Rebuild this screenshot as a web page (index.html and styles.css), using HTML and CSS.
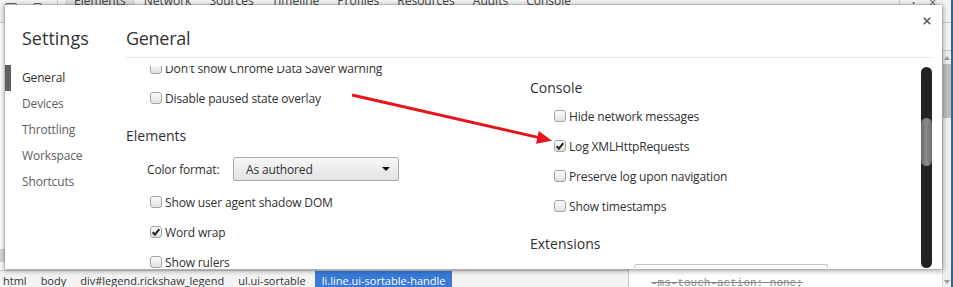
FILE: index.html
```html
<!DOCTYPE html>
<html>
<head>
<meta charset="utf-8">
<title>Settings</title>
<link rel="stylesheet" href="styles.css">
</head>
<body>
<div class="devtools">
  <div class="tabbar">
    <span class="tb-icon tb-inspect"></span>
    <span class="tb-icon tb-device"></span>
    <span class="tb-sep"></span>
    <span class="tab tab-selected">Elements</span>
    <span class="tab">Network</span>
    <span class="tab">Sources</span>
    <span class="tab">Timeline</span>
    <span class="tab">Profiles</span>
    <span class="tab">Resources</span>
    <span class="tab">Audits</span>
    <span class="tab">Console</span>
    <span class="tb-spacer"></span>
    <span class="tb-sep"></span>
    <span class="tb-dots">⋮</span>
    <span class="tb-dots">×</span>
  </div>
  <div class="main">
    <div class="left-pane">
      <div class="tree"><div class="tree-sel"></div></div>
      <div class="crumbs">
        <span class="crumb">html</span>
        <span class="crumb">body</span>
        <span class="crumb">div#legend.rickshaw_legend</span>
        <span class="crumb">ul.ui-sortable</span>
        <span class="crumb crumb-selected">li.line.ui-sortable-handle</span>
      </div>
    </div>
    <div class="styles">
      <div class="styles-toolbar"></div>
      <div class="styles-body">
        <div class="styles-content">
          <div class="prop"><s>-ms-touch-action: none;</s></div>
        </div>
        <div class="vscroll">
          <span class="arr-up"></span>
          <span class="vthumb"></span>
          <span class="vfill"></span>
          <span class="arr-down"></span>
        </div>
      </div>
    </div>
  </div>
</div>

<div class="dialog">
  <div class="sidebar">
    <div class="title">Settings</div>
    <div class="nav">
      <div class="nav-item nav-selected">General</div>
      <div class="nav-item">Devices</div>
      <div class="nav-item">Throttling</div>
      <div class="nav-item">Workspace</div>
      <div class="nav-item">Shortcuts</div>
    </div>
  </div>
  <div class="pane">
    <div class="pane-header">General</div>
    <div class="content">
      <div class="columns">
        <div class="col col-left">
          <div class="row"><span class="cb"></span>Don't show Chrome Data Saver warning</div>
          <div class="row"><span class="cb"></span>Disable paused state overlay</div>
          <div class="section-title">Elements</div>
          <div class="select-row">
            <span class="select-label">Color format:</span>
            <span class="select"><span class="select-text">As authored</span><span class="select-caret"></span></span>
          </div>
          <div class="row"><span class="cb"></span>Show user agent shadow DOM</div>
          <div class="row"><span class="cb cb-checked"><svg width="12" height="12" viewBox="0 0 12 12"><path d="M2.6 6.3 L4.9 8.6 L9.3 3.2" fill="none" stroke="#2a2a2a" stroke-width="2.1"/></svg></span>Word wrap</div>
          <div class="row"><span class="cb"></span>Show rulers</div>
        </div>
        <div class="col col-right">
          <div class="section-title">Console</div>
          <div class="row"><span class="cb"></span>Hide network messages</div>
          <div class="row"><span class="cb cb-checked"><svg width="12" height="12" viewBox="0 0 12 12"><path d="M2.6 6.3 L4.9 8.6 L9.3 3.2" fill="none" stroke="#2a2a2a" stroke-width="2.1"/></svg></span>Log XMLHttpRequests</div>
          <div class="row"><span class="cb"></span>Preserve log upon navigation</div>
          <div class="row"><span class="cb"></span>Show timestamps</div>
          <div class="section-title section-gap">Extensions</div>
          <div class="ext-row"><span class="ext-select"></span></div>
        </div>
      </div>
      <div class="scrollbar"><span class="thumb"></span></div>
    </div>
  </div>
  <button class="close" aria-label="Close">
    <svg width="8" height="8" viewBox="0 0 8 8"><path d="M0.8 0.8 L7.2 7.2 M7.2 0.8 L0.8 7.2" stroke="#555" stroke-width="1.6"/></svg>
  </button>
</div>

<svg class="annot" width="953" height="287" viewBox="0 0 953 287">
  <line x1="352" y1="95" x2="539" y2="137.6" stroke="#e8141c" stroke-width="3"/>
  <polygon points="552,140.7 538.8,131.1 536,143.7" fill="#e8141c"/>
</svg>
</body>
</html>
```

FILE: styles.css
```css
* { box-sizing: border-box; }
html, body { margin: 0; padding: 0; }
body {
  width: 953px;
  height: 287px;
  overflow: hidden;
  position: relative;
  font-family: "Open Sans", "Noto Sans", sans-serif;
  font-size: 12px;
  color: #333;
  background: #fff;
}

/* ---------- background devtools ---------- */
.devtools {
  display: flex;
  flex-direction: column;
  height: 287px;
  border-right: 2px solid #2d6896;
}
.tabbar {
  height: 23px;
  flex: none;
  display: flex;
  align-items: flex-start;
  background: #f3f3f3;
  border-bottom: 1px solid #cdcdcd;
  overflow: hidden;
}
.tb-icon {
  width: 12px;
  height: 13px;
  margin-top: 3px;
  border: 1.5px solid #666;
  border-radius: 2px;
}
.tb-inspect { margin-left: 5px; }
.tb-device { margin-left: 16px; width: 9px; }
.tb-sep {
  width: 1px;
  height: 16px;
  background: #ccc;
  margin: 0 7px 0 15px;
}
.tab {
  padding: 0 9px;
  line-height: 1px;
  height: 22px;
  color: #444;
  white-space: nowrap;
}
.tab-selected { background: #dcdcdc; }
.tb-spacer { flex: 1; }
.tb-dots { line-height: 4px; width: 22px; color: #555; font-size: 13px; }

.main { flex: 1; display: flex; min-height: 0; }
.left-pane { width: 628px; flex: none; display: flex; flex-direction: column; }
.tree { flex: 1; padding-top: 226px; }
.tree-sel { height: 13px; background: #dadada; }
.crumbs {
  height: 17px;
  flex: none;
  display: flex;
  align-items: stretch;
  background: #f3f3f3;
  border-top: 1px solid #d0d0d0;
  white-space: nowrap;
  font-size: 11px;
}
.crumb { padding: 3px 7px 0; line-height: 14px; color: #333; }
.crumb:first-child { padding-left: 3px; }
.crumb-selected { background: #3879d9; color: #fff; margin-left: 2px; }

.styles {
  flex: 1;
  display: flex;
  flex-direction: column;
  border-left: 1px solid #c8c8c8;
}
.styles-toolbar { height: 28px; flex: none; background: #f3f3f3; border-bottom: 1px solid #ccc; }
.styles-body { flex: 1; display: flex; }
.styles-content { flex: 1; display: flex; flex-direction: column; justify-content: flex-end; }
.prop {
  padding-left: 22px;
  font-family: "Liberation Mono", monospace;
  font-size: 11px;
  line-height: 14px;
  color: #888;
  margin-bottom: -3px;
}
.vscroll {
  width: 9px;
  flex: none;
  display: flex;
  flex-direction: column;
  align-items: center;
  background: #efefef;
  border-left: 1px solid #dcdcdc;
  padding: 5px 0 3px;
}
.arr-up { width: 0; height: 0; border-left: 3px solid transparent; border-right: 3px solid transparent; border-bottom: 4px solid #9a9a9a; }
.arr-down { width: 0; height: 0; border-left: 3px solid transparent; border-right: 3px solid transparent; border-top: 4px solid #9a9a9a; }
.vthumb { width: 8px; height: 54px; margin-top: 4px; background: #bdbdbd; border-radius: 1px; }
.vfill { flex: 1; }

/* ---------- dialog ---------- */
.dialog {
  position: absolute;
  left: 5px;
  top: 5px;
  width: 937px;
  height: 264px;
  background: #fff;
  display: grid;
  grid-template-columns: 121px 1fr;
  box-shadow: 0 0 0 1px rgba(0,0,0,0.08), 0 1px 5px 1px rgba(0,0,0,0.35);
}
.sidebar { padding-top: 21px; }
.title {
  font-size: 18px;
  line-height: 24px;
  padding-left: 17px;
  color: #333;
}
.nav { margin-top: 15px; }
.nav-item {
  height: 26px;
  line-height: 26px;
  padding-left: 17px;
  color: #606060;
  letter-spacing: -0.15px;
}
.nav-selected {
  border-left: 6px solid #5f5f5f;
  padding-left: 11px;
  color: #303030;
}

.pane {
  padding: 21px 10px 0 0;
  display: flex;
  flex-direction: column;
  min-width: 0;
}
.pane-header {
  font-size: 18px;
  line-height: 24px;
  padding-bottom: 7px;
  border-bottom: 1px solid #e6e6e6;
  color: #333;
  letter-spacing: -0.3px;
}
.content {
  margin-top: 8px;
  height: 202px;
  display: flex;
  overflow: hidden;
}
.columns {
  flex: 1;
  display: flex;
  align-items: flex-start;
  margin-top: -13px;
}
.col { display: flex; flex-direction: column; }
.col-left { width: 404px; flex: none; }
.col-right { flex: 1; padding-top: 22px; }

.row {
  height: 30px;
  display: flex;
  align-items: center;
  padding-left: 24px;
  letter-spacing: -0.15px;
  color: #303030;
  white-space: nowrap;
}
.cb {
  width: 12px;
  height: 12px;
  flex: none;
  margin-right: 3px;
  border: 1px solid #a4a4a4;
  border-radius: 3px;
  background: linear-gradient(#fdfdfd, #e0e0e0);
  display: flex;
  align-items: center;
  justify-content: center;
}
.cb svg { display: block; flex: none; }

.section-title {
  height: 26px;
  line-height: 26px;
  font-size: 14px;
  color: #303030;
}
.section-gap { margin-top: 10px; }
.col-left .section-title { margin-top: 10px; }

.select-row {
  height: 38px;
  padding: 2px 0 0 21px;
  display: flex;
  align-items: center;
  letter-spacing: -0.15px;
  color: #303030;
}
.select-label { width: 86px; flex: none; }
.select {
  width: 166px;
  height: 24px;
  display: flex;
  align-items: center;
  justify-content: space-between;
  padding: 0 8px 0 12px;
  border: 1px solid #a9a9a9;
  border-radius: 2px;
  background: linear-gradient(#f7f7f7, #e3e3e3);
}
.select-caret {
  width: 0;
  height: 0;
  border-left: 4px solid transparent;
  border-right: 4px solid transparent;
  border-top: 4px solid #111;
}
.ext-row { padding: 7px 0 0 104px; }
.ext-select {
  display: block;
  width: 194px;
  height: 24px;
  border: 1px solid #c4c4c4;
  border-radius: 2px;
  background: linear-gradient(#fdfdfd, #ececec);
}

.scrollbar {
  width: 11px;
  height: 201px;
  margin-top: 1px;
  flex: none;
  background: #222;
  border-radius: 6px;
  display: flex;
  flex-direction: column;
}
.thumb {
  margin-top: 51px;
  height: 48px;
  border-radius: 6px;
  background: linear-gradient(90deg, #6c6c6c, #8a8a8a 50%, #6c6c6c);
}

.close {
  position: absolute;
  right: 11px;
  top: 12px;
  width: 8px;
  height: 8px;
  padding: 0;
  border: 0;
  background: none;
  display: flex;
}

.annot {
  position: absolute;
  left: 0;
  top: 0;
  pointer-events: none;
}
```
